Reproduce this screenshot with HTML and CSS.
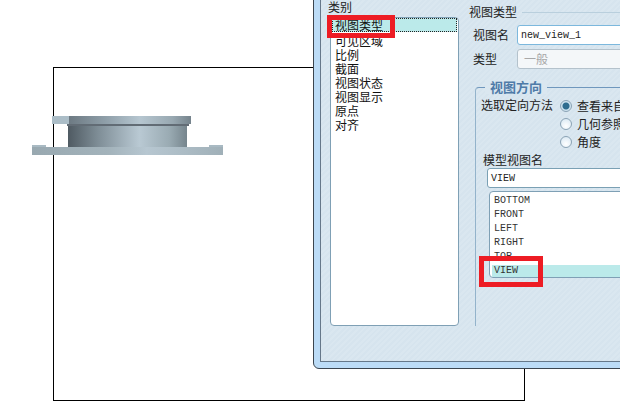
FILE: index.html
```html
<!DOCTYPE html>
<html lang="zh">
<head>
    <meta charset="UTF-8">
    <title>绘图视图</title>
    <link rel="stylesheet" href="styles.css">
</head>
<body>

<!-- drawing sheet with the model view -->
<div class="sheet"></div>
<div class="part part-tab"></div>
<div class="part part-cap"></div>
<div class="part part-groove"></div>
<div class="part part-body"></div>
<div class="part part-bump-left"></div>
<div class="part part-bump-right"></div>
<div class="part part-flange"></div>

<div class="window">
    <div class="pane">
        <div class="category">
            <div class="caption">类别</div>
            <div class="list category-list">
                <div class="row selected">视图类型</div>
                <div class="row">可见区域</div>
                <div class="row">比例</div>
                <div class="row">截面</div>
                <div class="row">视图状态</div>
                <div class="row">视图显示</div>
                <div class="row">原点</div>
                <div class="row">对齐</div>
            </div>
        </div>

        <div class="settings">
            <div class="section-title"><span>视图类型</span></div>
            <div class="field">
                <label>视图名</label>
                <div class="input mono active">new_view_1</div>
            </div>
            <div class="field">
                <label>类型</label>
                <div class="input disabled">一般</div>
            </div>

            <div class="group">
                <div class="legend">视图方向</div>
                <div class="method">
                    <div class="method-label">选取定向方法</div>
                    <div class="radios">
                        <div class="radio-row"><span class="radio checked"></span>查看来自模型的名称</div>
                        <div class="radio-row"><span class="radio"></span>几何参照</div>
                        <div class="radio-row"><span class="radio"></span>角度</div>
                    </div>
                </div>
                <div class="view-caption">模型视图名</div>
                <div class="input mono view-input">VIEW</div>
                <div class="list view-list mono">
                    <div class="view-row">BOTTOM</div>
                    <div class="view-row">FRONT</div>
                    <div class="view-row">LEFT</div>
                    <div class="view-row">RIGHT</div>
                    <div class="view-row">TOP</div>
                    <div class="view-row picked">VIEW</div>
                </div>
            </div>
        </div>
    </div>
</div>

<!-- red callouts -->
<div class="callout callout-category"></div>
<div class="callout callout-view"></div>

</body>
</html>
```

FILE: styles.css
```css
html, body {
    margin: 0;
    padding: 0;
    width: 620px;
    height: 404px;
    overflow: hidden;
    background-color: #fff;
}

body {
    position: relative;
    font-family: "Noto Sans CJK SC", "Liberation Sans", sans-serif;
    font-size: 12px;
    line-height: 14px;
    color: #222;
}

.sheet {
    position: absolute;
    left: 53px;
    top: 67px;
    width: 470px;
    height: 332px;
    border: 1px solid #000;
}

.part {
    position: absolute;
}

.part-tab {
    left: 52px;
    top: 116px;
    width: 17px;
    height: 8px;
    background-color: #abbdc7;
}

.part-cap {
    left: 69px;
    top: 116px;
    width: 122px;
    height: 8px;
    background: linear-gradient(90deg, #6d7a83, #8f9fa9 30%, #b6c6d0 58%, #98a8b1 85%, #75838c);
}

.part-groove {
    left: 67px;
    top: 124px;
    width: 122px;
    height: 2px;
    background-color: #626c75;
}

.part-body {
    left: 68px;
    top: 126px;
    width: 119px;
    height: 21px;
    background: linear-gradient(90deg, #4f5a62, #7e8d96 25%, #b9c9d3 60%, #9aabb3 85%, #76858d);
}

.part-bump-left,
.part-bump-right {
    top: 145px;
    width: 14px;
    height: 2px;
    background-color: #a9bac3;
}

.part-bump-left {
    left: 32px;
}

.part-bump-right {
    left: 209px;
}

.part-flange {
    left: 32px;
    top: 147px;
    width: 191px;
    height: 8px;
    background: linear-gradient(90deg, #98a8b0, #a3b3bb 40%, #b7c7d1 60%, #a0b0b8);
}

.window {
    position: absolute;
    left: 313px;
    top: -11px;
    width: 340px;
    height: 380px;
    box-sizing: border-box;
    padding: 0 0 6px 6px;
    border: 1px solid #3c4650;
    border-radius: 0 0 0 6px;
    background-color: #bcdcf7;
}

.pane {
    display: flex;
    box-sizing: border-box;
    height: 100%;
    padding: 9px 0 0 7px;
    border: 1px solid #66788a;
    background-color: #dae7f0;
    background-image: repeating-linear-gradient(135deg, #dae7f0 0, #dae7f0 2px, #d6e4ee 2px, #d6e4ee 4px);
}

.category {
    width: 131px;
    margin-right: 10px;
}

.caption {
    height: 17px;
    font-size: 12px;
}

.list {
    box-sizing: border-box;
    border: 1px solid #7fa0b5;
    border-radius: 4px;
    background-color: #fff;
}

.category-list {
    width: 129px;
    height: 309px;
    margin-left: 2px;
    padding: 0 1px;
}

.row {
    height: 14px;
    padding-left: 3px;
    line-height: 16px;
    color: #111;
}

.selected {
    box-sizing: border-box;
    margin-bottom: 1px;
    line-height: 12px;
    border: 1px dotted #222;
    background-color: #bbeaea;
    padding-left: 2px;
}

.settings {
    flex: 1;
    padding-top: 5px;
}

.section-title {
    display: flex;
    align-items: center;
    height: 14px;
}

.section-title::after {
    content: "";
    flex: 1;
    height: 1px;
    margin-left: 5px;
    background-color: #b9cfdd;
}

.field {
    display: flex;
    align-items: center;
    height: 20px;
    margin-top: 6px;
    padding-left: 4px;
}

.field + .field {
    margin-top: 4px;
}

.field label {
    width: 44px;
}

.input {
    flex: 1;
    box-sizing: border-box;
    height: 20px;
    padding-left: 3px;
    line-height: 20px;
    border: 1px solid #b4c2cc;
    border-radius: 3px;
    background-color: #fff;
}

.mono {
    font-family: "Liberation Mono", monospace;
    font-size: 10px;
}

.active {
    border-color: #7cb8dd;
}

.disabled {
    padding-left: 6px;
    line-height: 18px;
    color: #a8a8a8;
    background-color: #f4f7f9;
}

.group {
    position: relative;
    box-sizing: border-box;
    height: 239px;
    margin: 18px 0 0 6px;
    padding: 9px 0 0 5px;
    border-top: 1px solid #6f97bd;
    border-left: 1px solid #93b3cb;
    border-radius: 4px 0 0 0;
}

.legend {
    position: absolute;
    left: 9px;
    top: -8px;
    padding: 0 5px;
    font-size: 13px;
    font-weight: 700;
    color: #4f7ba8;
    background-color: #dae7f0;
}

.method {
    display: flex;
}

.method-label {
    width: 79px;
    line-height: 16px;
}

.radio-row {
    display: flex;
    align-items: center;
    height: 18px;
    white-space: nowrap;
}

.radio {
    box-sizing: border-box;
    width: 12px;
    height: 12px;
    margin-right: 5px;
    border: 1px solid #8ba3b5;
    border-radius: 50%;
    background: radial-gradient(circle at 50% 70%, #fff, #d5e6f2);
}

.checked {
    background: radial-gradient(circle, #2f6d8f 0, #2f6d8f 3px, #cfe4f0 4px);
}

.view-caption {
    margin: 2px 0 1px 2px;
}

.view-input {
    height: 20px;
    margin: 0 0 0 6px;
    padding-left: 3px;
    border-color: #7aa0b4;
}

.view-list {
    height: 87px;
    margin: 3px 0 0 8px;
    padding: 2px 1px 0 2px;
    border-radius: 4px 0 0 4px;
}

.view-row {
    height: 14px;
    padding-left: 2px;
    color: #333;
}

.picked {
    height: 12px;
    margin-top: 1px;
    line-height: 12px;
    background-color: #bbeaea;
}

.callout {
    position: absolute;
    box-sizing: border-box;
    border: 5px solid #ed1c24;
}

.callout-category {
    left: 327px;
    top: 15px;
    width: 68px;
    height: 23px;
}

.callout-view {
    left: 479px;
    top: 256px;
    width: 64px;
    height: 31px;
}
```
